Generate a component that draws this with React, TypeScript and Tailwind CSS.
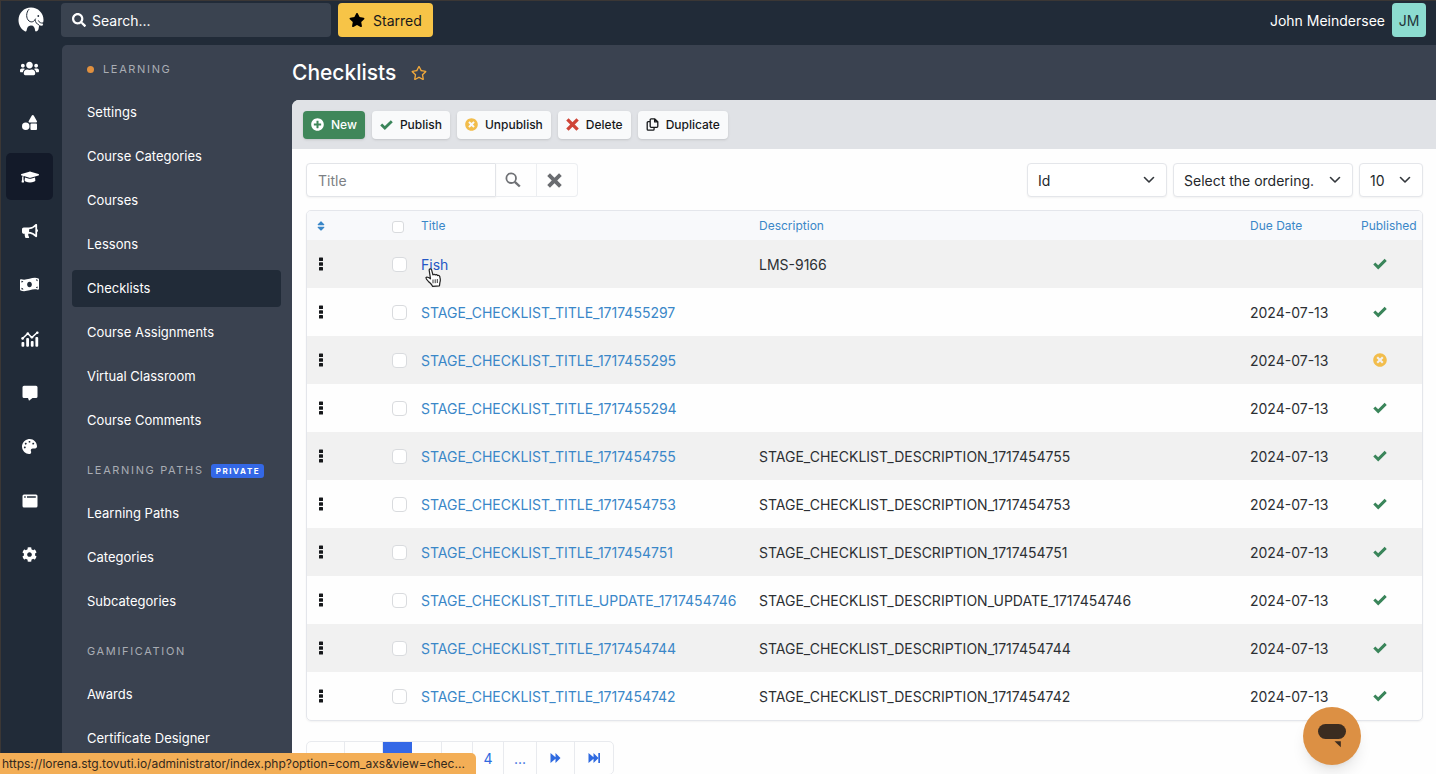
import React from "react";
import {
  FaUsers,
  FaShapes,
  FaGraduationCap,
  FaBullhorn,
  FaMoneyBillWave,
  FaPalette,
  FaCog,
  FaSearch,
  FaStar,
  FaRegStar,
  FaSort,
  FaPlusCircle,
  FaTimesCircle,
} from "react-icons/fa";

type IconProps = { className?: string };

function ElephantLogo() {
  return (
    <svg viewBox="0 0 26 26" className="size-[26px]" aria-hidden="true">
      <path
        d="M13 .5C6 .5.5 6 .5 13c0 4.800 2.300 9 6.300 11.300.9.500 1.600.2 1.800-.8.500-3 1.600-4.800 4.200-4.900 3-.1 4 2 4.300 4.900.1.900.8 1.100 1.600.8.900-.4 1.500-1 1.800-2l.7-4.300c1 1 3 1.200 4 .1l-.6-1.300c.6-1.200.9-2.400.9-3.800C25.500 6 20 .5 13 .5z"
        fill="#fff"
      />
      <path
        d="M10.800 2.500C7.800 5.500 8 11.500 11 14c2.400 1.800 5.400.8 6.500-2M17 13c.6 2.400 1.800 4 3.600 4.800M20.500 13.800c.8 1.800 2.300 2.600 4.500 2.200"
        fill="none"
        stroke="#212b39"
        strokeWidth="1"
        strokeLinecap="round"
      />
      <circle cx="20.300" cy="9" r=".9" fill="#212b39" />
    </svg>
  );
}

function ChartIcon({ className }: IconProps) {
  return (
    <svg viewBox="0 0 18 16" className={className} aria-hidden="true">
      <path
        d="M1.500 7.500 6.800 2.500l4 4L16.300 1.500"
        fill="none"
        stroke="currentColor"
        strokeWidth="1.600"
        strokeLinecap="round"
        strokeLinejoin="round"
      />
      <g fill="currentColor">
        <circle cx="1.600" cy="7.400" r="1.300" />
        <circle cx="6.800" cy="2.500" r="1.300" />
        <circle cx="10.900" cy="6.300" r="1.300" />
        <circle cx="16.300" cy="1.700" r="1.300" />
        <rect x=".5" y="11" width="2.800" height="4.800" rx="1" />
        <rect x="5.200" y="7" width="2.800" height="8.800" rx="1" />
        <rect x="9.800" y="10" width="2.800" height="5.800" rx="1" />
        <rect x="14.400" y="6" width="2.800" height="9.800" rx="1" />
      </g>
    </svg>
  );
}

function MessageIcon({ className }: IconProps) {
  return (
    <svg viewBox="0 0 16 16" className={className} aria-hidden="true">
      <path
        d="M2 .8h12A1.500 1.500 0 0 1 15.500 2.300v9.200A1.500 1.500 0 0 1 14 13h-3.500L7 15.800 6 13H2A1.500 1.500 0 0 1 .5 11.500V2.300A1.500 1.500 0 0 1 2 .8z"
        fill="currentColor"
      />
    </svg>
  );
}

function WindowIcon({ className }: IconProps) {
  return (
    <svg viewBox="0 0 16 16" className={className} aria-hidden="true">
      <path
        fillRule="evenodd"
        d="M2 1.500h12A1.500 1.500 0 0 1 15.500 3v10a1.500 1.500 0 0 1-1.500 1.500H2A1.500 1.500 0 0 1 .5 13V3A1.500 1.500 0 0 1 2 1.500zM2.200 3.300v1.500h1.500V3.300zM5 3.300v1.500h8.800V3.300z"
        fill="currentColor"
      />
    </svg>
  );
}

function CheckIcon({ className }: IconProps) {
  return (
    <svg viewBox="0 0 14 12" className={className} aria-hidden="true">
      <path d="M1.300 5.500 5.200 9.300 12.700 1.900" fill="none" stroke="currentColor" strokeWidth="3" />
    </svg>
  );
}

function CrossIcon({ className }: IconProps) {
  return (
    <svg viewBox="0 0 14 14" className={className} aria-hidden="true">
      <path d="M1.500 1.500 12.500 12.500M12.500 1.500 1.500 12.500" stroke="currentColor" strokeWidth="3.600" />
    </svg>
  );
}

function DuplicateIcon({ className }: IconProps) {
  return (
    <svg viewBox="0 0 14 14" className={className} aria-hidden="true">
      <path
        d="M5.500 1h4L12.700 4v5a1 1 0 0 1-1 1H5.500a1 1 0 0 1-1-1V2a1 1 0 0 1 1-1zM9.300 1v3.200h3.400M4.500 4H2.300a1 1 0 0 0-1 1v7a1 1 0 0 0 1 1h5.400a1 1 0 0 0 1-1v-2"
        fill="none"
        stroke="currentColor"
        strokeWidth="1.400"
        strokeLinejoin="round"
      />
    </svg>
  );
}

function MagnifierIcon({ className }: IconProps) {
  return (
    <svg viewBox="0 0 16 16" className={className} aria-hidden="true">
      <circle cx="6.200" cy="6.200" r="4.800" fill="none" stroke="currentColor" strokeWidth="1.800" />
      <path d="M9.800 9.800 14.800 14.500" stroke="currentColor" strokeWidth="2.400" />
    </svg>
  );
}

function ChevronIcon({ className }: IconProps) {
  return (
    <svg viewBox="0 0 12 8" className={className} aria-hidden="true">
      <path
        d="M1.500 1.500 6 6l4.500-4.500"
        fill="none"
        stroke="currentColor"
        strokeWidth="1.600"
        strokeLinecap="round"
        strokeLinejoin="round"
      />
    </svg>
  );
}

function HandleIcon() {
  return (
    <svg viewBox="0 0 4 14" className="h-[14px] w-1" aria-hidden="true">
      <g fill="#16181b">
        <rect x="0" y=".5" width="4" height="3.600" rx=".5" />
        <rect x="0" y="5.200" width="4" height="3.600" rx=".5" />
        <rect x="0" y="9.900" width="4" height="3.600" rx=".5" />
      </g>
    </svg>
  );
}

function ForwardIcon({ end, back }: { end?: boolean; back?: boolean }) {
  return (
    <svg
      viewBox="0 0 12 10"
      className={back ? "h-[10px] w-3 -scale-x-100" : "h-[10px] w-3"}
      aria-hidden="true"
    >
      <path d="M.5 0 5.500 4.200V0l5 5-5 5V5.800L.5 10z" fill="currentColor" />
      {end && <rect x="10.300" y="0" width="1.700" height="10" fill="currentColor" />}
    </svg>
  );
}

function HandCursor() {
  return (
    <svg viewBox="0 0 17 19" className="h-[19px] w-[17px]" aria-hidden="true">
      <path
        d="M4.200 2.300c-.2-1.700 2-2 2.400-.4l1.300 5c.5-1 2-.8 2.300.1.700-.7 2-.4 2.300.6.900-.5 2-.1 2.200.9.500 2 1.200 3.600.2 5.900l-.4 3.400-6.800.6c-1-2.200-2.200-3-4-4.700C2.500 12.500.5 10.700 1 9.600c.7-1 2.400-.3 4.500 1.200z"
        fill="#fff"
        stroke="#222"
        strokeWidth="1.200"
        strokeLinejoin="round"
      />
      <path d="M8 11.500v3.800M10.200 11.300v3.900M12.300 11v4" stroke="#222" strokeWidth=".9" />
    </svg>
  );
}

const rail: { label: string; icon: React.ReactNode; active?: boolean }[] = [
  { label: "Users", icon: <FaUsers className="size-[19px]" /> },
  { label: "Content", icon: <FaShapes className="size-[15px]" /> },
  { label: "Learning", icon: <FaGraduationCap className="size-[18px]" />, active: true },
  { label: "Marketing", icon: <FaBullhorn className="size-4" /> },
  { label: "Commerce", icon: <FaMoneyBillWave className="size-[19px]" /> },
  { label: "Reports", icon: <ChartIcon className="h-4 w-[18px]" /> },
  { label: "Messages", icon: <MessageIcon className="size-4" /> },
  { label: "Design", icon: <FaPalette className="size-[15px]" /> },
  { label: "Pages", icon: <WindowIcon className="size-4" /> },
  { label: "Configuration", icon: <FaCog className="size-[15px]" /> },
];

const sections = [
  {
    title: "Learning",
    dot: true,
    items: [
      "Settings",
      "Course Categories",
      "Courses",
      "Lessons",
      "Checklists",
      "Course Assignments",
      "Virtual Classroom",
      "Course Comments",
    ],
  },
  { title: "Learning Paths", badge: "Private", items: ["Learning Paths", "Categories", "Subcategories"] },
  { title: "Gamification", items: ["Awards", "Certificate Designer"] },
];

const rows = [
  { title: "Fish", description: "LMS-9166", due: "", published: true },
  { title: "STAGE_CHECKLIST_TITLE_1717455297", description: "", due: "2024-07-13", published: true },
  { title: "STAGE_CHECKLIST_TITLE_1717455295", description: "", due: "2024-07-13", published: false },
  { title: "STAGE_CHECKLIST_TITLE_1717455294", description: "", due: "2024-07-13", published: true },
  {
    title: "STAGE_CHECKLIST_TITLE_1717454755",
    description: "STAGE_CHECKLIST_DESCRIPTION_1717454755",
    due: "2024-07-13",
    published: true,
  },
  {
    title: "STAGE_CHECKLIST_TITLE_1717454753",
    description: "STAGE_CHECKLIST_DESCRIPTION_1717454753",
    due: "2024-07-13",
    published: true,
  },
  {
    title: "STAGE_CHECKLIST_TITLE_1717454751",
    description: "STAGE_CHECKLIST_DESCRIPTION_1717454751",
    due: "2024-07-13",
    published: true,
  },
  {
    title: "STAGE_CHECKLIST_TITLE_UPDATE_1717454746",
    description: "STAGE_CHECKLIST_DESCRIPTION_UPDATE_1717454746",
    due: "2024-07-13",
    published: true,
  },
  {
    title: "STAGE_CHECKLIST_TITLE_1717454744",
    description: "STAGE_CHECKLIST_DESCRIPTION_1717454744",
    due: "2024-07-13",
    published: true,
  },
  {
    title: "STAGE_CHECKLIST_TITLE_1717454742",
    description: "STAGE_CHECKLIST_DESCRIPTION_1717454742",
    due: "2024-07-13",
    published: true,
  },
];

function TopBar() {
  return (
    <header className="flex h-11 shrink-0 items-start pt-[2px] pr-[10px]">
      <a href="#home" aria-label="Home" className="flex h-[34px] w-[60px] items-center justify-center">
        <ElephantLogo />
      </a>
      <label className="flex h-[34px] w-[270px] items-center gap-[6px] rounded-[4px] bg-[#3a4350] px-[11px] text-white">
        <FaSearch className="size-[14px] shrink-0" />
        <input
          type="search"
          aria-label="Search"
          placeholder="Search..."
          className="min-w-0 flex-1 bg-transparent text-[14px] text-white outline-none placeholder:text-white"
        />
      </label>
      <button
        type="button"
        className="ml-[7px] flex h-[34px] items-center gap-2 rounded-[4px] bg-[#f7c447] px-[11px] text-[14px] text-[#17191c]"
      >
        <FaStar className="size-4 text-black" />
        Starred
      </button>
      <a href="#account" className="ml-auto flex items-center gap-[7px] text-[14px] text-white">
        John Meindersee
        <span className="flex size-[34px] items-center justify-center rounded-[4px] bg-[#8cdcd0] text-[#22343a]">
          JM
        </span>
      </a>
    </header>
  );
}

function Rail() {
  return (
    <nav aria-label="Main" className="flex w-[61px] shrink-0 flex-col gap-[7px] pl-[5px]">
      {rail.map((r) => (
        <button
          key={r.label}
          type="button"
          aria-label={r.label}
          className={
            r.active
              ? "flex size-[47px] shrink-0 items-center justify-center rounded-[5px] bg-[#131a29] text-white"
              : "flex size-[47px] shrink-0 items-center justify-center rounded-[5px] text-white"
          }
        >
          {r.icon}
        </button>
      ))}
    </nav>
  );
}

function SideMenu() {
  return (
    <nav aria-label="Learning" className="w-[230px] shrink-0 overflow-hidden pr-[11px] pl-[10px]">
      {sections.map((s) => (
        <section key={s.title}>
          <h2 className="flex h-[49px] items-center px-[15px] text-[11px] tracking-[0.15em] whitespace-nowrap text-[#a9adb4] uppercase">
            {s.dot && <span className="mr-[9px] size-[7px] rounded-full bg-[#e0903f]" />}
            {s.title}
            {s.badge && (
              <span className="ml-[7px] flex h-[14px] items-center rounded-[3px] bg-[#3468e6] pr-1 pl-[5px] text-[8px] font-bold tracking-[0.2em] text-white">
                {s.badge}
              </span>
            )}
          </h2>
          <ul>
            {s.items.map((item) => (
              <li key={item} className="pb-[7px]">
                <a
                  href={"#" + item.toLowerCase().replace(/ /g, "-")}
                  aria-current={item === "Checklists" ? "page" : undefined}
                  className={
                    item === "Checklists"
                      ? "flex h-[37px] items-center rounded-[4px] bg-[#212b38] px-[15px] text-[13px] text-white"
                      : "flex h-[37px] items-center rounded-[4px] px-[15px] text-[13px] text-white"
                  }
                >
                  {item}
                </a>
              </li>
            ))}
          </ul>
        </section>
      ))}
    </nav>
  );
}

function ToolButton({ icon, children }: { icon: React.ReactNode; children: React.ReactNode }) {
  return (
    <button
      type="button"
      className="flex h-7 items-center gap-[7px] rounded-[4px] bg-[#f9fafb] px-2 text-[12px] font-medium text-[#16181b] shadow-sm"
    >
      {icon}
      {children}
    </button>
  );
}

function Toolbar() {
  return (
    <div className="flex h-[49px] shrink-0 items-center gap-[7px] rounded-tl-[7px] bg-[#e0e2e6] px-[11px]">
      <button
        type="button"
        className="flex h-7 items-center gap-[7px] rounded-[4px] bg-[#40875a] px-2 text-[12px] font-medium text-white shadow-sm"
      >
        <FaPlusCircle className="size-[13px]" />
        New
      </button>
      <ToolButton icon={<CheckIcon className="h-3 w-[13px] text-[#3a855a]" />}>Publish</ToolButton>
      <ToolButton icon={<FaTimesCircle className="size-[13px] text-[#f2bd4c]" />}>Unpublish</ToolButton>
      <ToolButton icon={<CrossIcon className="size-[13px] text-[#cf4437]" />}>Delete</ToolButton>
      <ToolButton icon={<DuplicateIcon className="size-[13px]" />}>Duplicate</ToolButton>
    </div>
  );
}

function Select({ label, options, className }: { label: string; options: string[]; className: string }) {
  return (
    <div className={className}>
      <select
        aria-label={label}
        className="h-[34px] w-full appearance-none rounded-[4px] border border-[#e4e6ea] bg-white pl-[10px] text-[14px] text-[#24272b] shadow-xs"
      >
        {options.map((o) => (
          <option key={o}>{o}</option>
        ))}
      </select>
      <ChevronIcon className="pointer-events-none absolute top-[13px] right-3 h-2 w-3 text-[#33373c]" />
    </div>
  );
}

function Filters() {
  return (
    <div className="flex items-center">
      <input
        type="text"
        aria-label="Title"
        placeholder="Title"
        className="h-[34px] w-[190px] rounded-l-[4px] border border-[#e2e4e8] bg-white px-[11px] text-[14px] shadow-xs outline-none placeholder:text-[#7c7f84]"
      />
      <button
        type="button"
        aria-label="Search titles"
        className="flex h-[34px] w-[41px] items-center border-y border-r border-[#eceef1] pl-[9px] text-[#6f7175]"
      >
        <MagnifierIcon className="size-4" />
      </button>
      <button
        type="button"
        aria-label="Clear"
        className="flex h-[34px] w-[41px] items-center rounded-r-[4px] border-y border-r border-[#eceef1] pl-[10px] text-[#6a6c70]"
      >
        <CrossIcon className="size-[15px]" />
      </button>
      <div className="ml-auto flex gap-[6px]">
        <Select label="Sort by" options={["Id", "Title", "Due Date"]} className="relative w-[140px]" />
        <Select
          label="Ordering"
          options={["Select the ordering.", "Ascending", "Descending"]}
          className="relative w-[180px]"
        />
        <Select label="Rows per page" options={["10", "20", "50"]} className="relative w-16" />
      </div>
    </div>
  );
}

function ChecklistTable() {
  return (
    <div className="mt-[13px] overflow-hidden rounded-[5px] border border-[#e4e6eb] shadow-xs">
      <table className="w-full table-fixed text-left">
        <colgroup>
          <col className="w-[85px]" />
          <col className="w-[29px]" />
          <col className="w-[338px]" />
          <col />
          <col className="w-[111px]" />
          <col className="w-[61px]" />
        </colgroup>
        <thead>
          <tr className="h-[29px] bg-[#f8f9fb] text-[12px] text-[#3a87c8]">
            <th className="pl-2 font-normal">
              <button type="button" aria-label="Sort by order" className="flex h-4 w-3 items-center justify-center">
                <FaSort className="size-3" />
              </button>
            </th>
            <th className="font-normal">
              <input
                type="checkbox"
                aria-label="Select all"
                className="mt-[2px] block size-3 appearance-none rounded-[3px] border border-[#d9dbde] bg-white"
              />
            </th>
            <th className="font-normal">
              <a href="#sort-title">Title</a>
            </th>
            <th className="font-normal">
              <a href="#sort-description">Description</a>
            </th>
            <th className="font-normal">
              <a href="#sort-due">Due Date</a>
            </th>
            <th className="font-normal">
              <a href="#sort-published">Published</a>
            </th>
          </tr>
        </thead>
        <tbody>
          {rows.map((r) => (
            <tr key={r.title} className="h-12 text-[14px] text-[#2c2f33] odd:bg-[#f1f1f1]">
              <td className="pl-3">
                <HandleIcon />
              </td>
              <td>
                <input
                  type="checkbox"
                  aria-label={"Select " + r.title}
                  className="block size-[15px] appearance-none rounded-[4px] border border-[#d9dbde] bg-white"
                />
              </td>
              <td className="whitespace-nowrap">
                <a
                  href={"#" + r.title}
                  className={r.title === "Fish" ? "relative text-[#2457c5]" : "text-[#3a87c8]"}
                >
                  {r.title}
                  {r.title === "Fish" && (
                    <span className="absolute top-3 left-1">
                      <HandCursor />
                    </span>
                  )}
                </a>
              </td>
              <td className="whitespace-nowrap">{r.description}</td>
              <td className="whitespace-nowrap">{r.due}</td>
              <td className="pl-3">
                <button
                  type="button"
                  aria-label={r.published ? "Published" : "Unpublished"}
                  className="flex size-[14px] items-center justify-center"
                >
                  {r.published ? (
                    <CheckIcon className="h-3 w-[14px] text-[#3a855a]" />
                  ) : (
                    <FaTimesCircle className="size-[14px] text-[#f2bd4c]" />
                  )}
                </button>
              </td>
            </tr>
          ))}
        </tbody>
      </table>
    </div>
  );
}

function Pagination() {
  const cell =
    "flex h-8 items-center justify-center border-r border-[#e8eaee] text-[14px] text-[#2f6ae0] last:border-r-0";
  return (
    <nav
      aria-label="Pagination"
      className="mt-5 flex w-fit shrink-0 overflow-hidden rounded-[5px] border border-[#e8eaee]"
    >
      <a href="#first" aria-label="First page" className={cell + " w-[38px]"}>
        <ForwardIcon end back />
      </a>
      <a href="#previous" aria-label="Previous page" className={cell + " w-[38px]"}>
        <ForwardIcon back />
      </a>
      <a
        href="#1"
        aria-current="page"
        className="flex h-8 w-[29px] items-center justify-center bg-[#3468e6] text-[14px] text-white"
      >
        1
      </a>
      <a href="#2" className={cell + " w-[30px]"}>2</a>
      <a href="#3" className={cell + " w-[31px]"}>3</a>
      <a href="#4" className={cell + " w-[31px]"}>4</a>
      <a href="#more" className={cell + " w-[33px]"}>...</a>
      <a href="#next" aria-label="Next page" className={cell + " w-[38px]"}>
        <ForwardIcon />
      </a>
      <a href="#last" aria-label="Last page" className={cell + " w-[38px]"}>
        <ForwardIcon end />
      </a>
    </nav>
  );
}

export default function App() {
  return (
    <div className="flex h-screen flex-col overflow-hidden border-t border-l border-[#3b3735] bg-[#212b38] font-['Inter',sans-serif]">
      <TopBar />
      <div className="flex min-h-0 flex-1">
        <Rail />
        <div className="flex min-w-0 flex-1 rounded-tl-[5px] bg-[#3a4250]">
          <SideMenu />
          <main className="flex min-w-0 flex-1 flex-col">
            <div className="flex h-[55px] shrink-0 items-center gap-[15px]">
              <h1 className="text-[21px] font-medium text-white">Checklists</h1>
              <button type="button" aria-label="Star this page" className="text-[#f2a93b]">
                <FaRegStar className="size-4" />
              </button>
            </div>
            <div className="flex min-h-0 flex-1 flex-col rounded-tl-[7px] bg-[#fefefe]">
              <Toolbar />
              <div className="min-h-0 flex-1 overflow-hidden pt-[14px] pr-[13px] pl-[14px]">
                <Filters />
                <ChecklistTable />
                <Pagination />
              </div>
            </div>
          </main>
        </div>
      </div>

      <div className="fixed bottom-0 left-0 flex h-[21px] w-[476px] items-center rounded-tr-[5px] bg-[#f3ae56] pl-[2px] text-[12px] whitespace-nowrap text-[#33291d]">
        https://lorena.stg.tovuti.io/administrator/index.php?option=com_axs&amp;view=chec...
      </div>

      <button
        type="button"
        aria-label="Open chat"
        className="fixed right-[75px] bottom-[9px] flex size-[58px] items-center justify-center rounded-full bg-[#dc9044] shadow-lg"
      >
        <svg viewBox="0 0 30 24" className="h-6 w-[30px]" aria-hidden="true">
          <rect x="1" y="0" width="28" height="15" rx="7.500" fill="#3b2c20" />
          <path d="M17.500 17.300h6.300v6z" fill="#3b2c20" />
        </svg>
      </button>
    </div>
  );
}
